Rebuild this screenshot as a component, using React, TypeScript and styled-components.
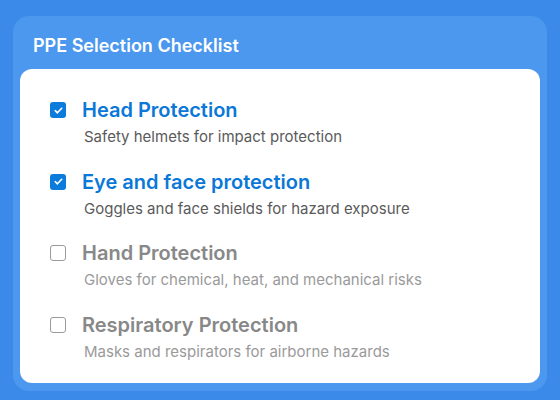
import React from 'react'
import styled, { createGlobalStyle } from 'styled-components'

type TItem = {
  title: string
  description: string
  checked: boolean
}

const items: TItem[] = [
  { title: 'Head Protection', description: 'Safety helmets for impact protection', checked: true },
  { title: 'Eye and face protection', description: 'Goggles and face shields for hazard exposure', checked: true },
  { title: 'Hand Protection', description: 'Gloves for chemical, heat, and mechanical risks', checked: false },
  { title: 'Respiratory Protection', description: 'Masks and respirators for airborne hazards', checked: false }
]

const GlobalStyle = createGlobalStyle`
  html, body {
    margin: 0;
    background: #3b8aea;
  }
  body {
    padding: 16px 13px 8px;
    font-family: Inter, "Noto Sans", sans-serif;
  }
`

const Panel = styled.section`
  background: #4c98ee;
  border-radius: 16px;
  padding: 0 7px 8px;
`

const Header = styled.h1`
  margin: 0;
  padding: 18px 13px 11px;
  font-size: 18px;
  line-height: 24px;
  font-weight: 600;
  color: #ffffff;
`

const Card = styled.div`
  background: #ffffff;
  border-radius: 12px;
  padding: 27px 30px 21px;
  display: flex;
  flex-direction: column;
  gap: 20.5px;
`

const Item = styled.label`
  display: flex;
  flex-direction: column;
  cursor: pointer;
`

const Row = styled.div`
  display: flex;
  align-items: center;
  gap: 16px;
`

const Box = styled.span<{ $checked: boolean }>`
  width: 16px;
  height: 16px;
  box-sizing: border-box;
  border-radius: 3px;
  display: flex;
  align-items: center;
  justify-content: center;
  flex-shrink: 0;
  background: ${({ $checked }) => ($checked ? '#0b7bdc' : '#ffffff')};
  border: ${({ $checked }) => ($checked ? 'none' : '1.5px solid #9a9a9a')};
`

const Title = styled.span<{ $checked: boolean }>`
  font-size: 20px;
  line-height: 28px;
  font-weight: 600;
  color: ${({ $checked }) => ($checked ? '#0b78d8' : '#888888')};
`

const Description = styled.span<{ $checked: boolean }>`
  margin: 3px 0 0 34px;
  font-size: 15px;
  line-height: 20px;
  color: ${({ $checked }) => ($checked ? '#5a5a5a' : '#9a9a9a')};
`

const Check = () => (
  <svg width="11" height="11" viewBox="0 0 12 12" fill="none">
    <path d="M2.5 6.2l2.3 2.3 4.7-4.9" stroke="#ffffff" strokeWidth="1.8" strokeLinecap="round" strokeLinejoin="round" />
  </svg>
)

export default function App(): JSX.Element {
  return (
    <>
      <GlobalStyle />
      <Panel>
        <Header>PPE Selection Checklist</Header>
        <Card>
          {items.map((item) => (
            <Item key={item.title}>
              <Row>
                <Box $checked={item.checked}>{item.checked && <Check />}</Box>
                <Title $checked={item.checked}>{item.title}</Title>
              </Row>
              <Description $checked={item.checked}>{item.description}</Description>
            </Item>
          ))}
        </Card>
      </Panel>
    </>
  )
}
